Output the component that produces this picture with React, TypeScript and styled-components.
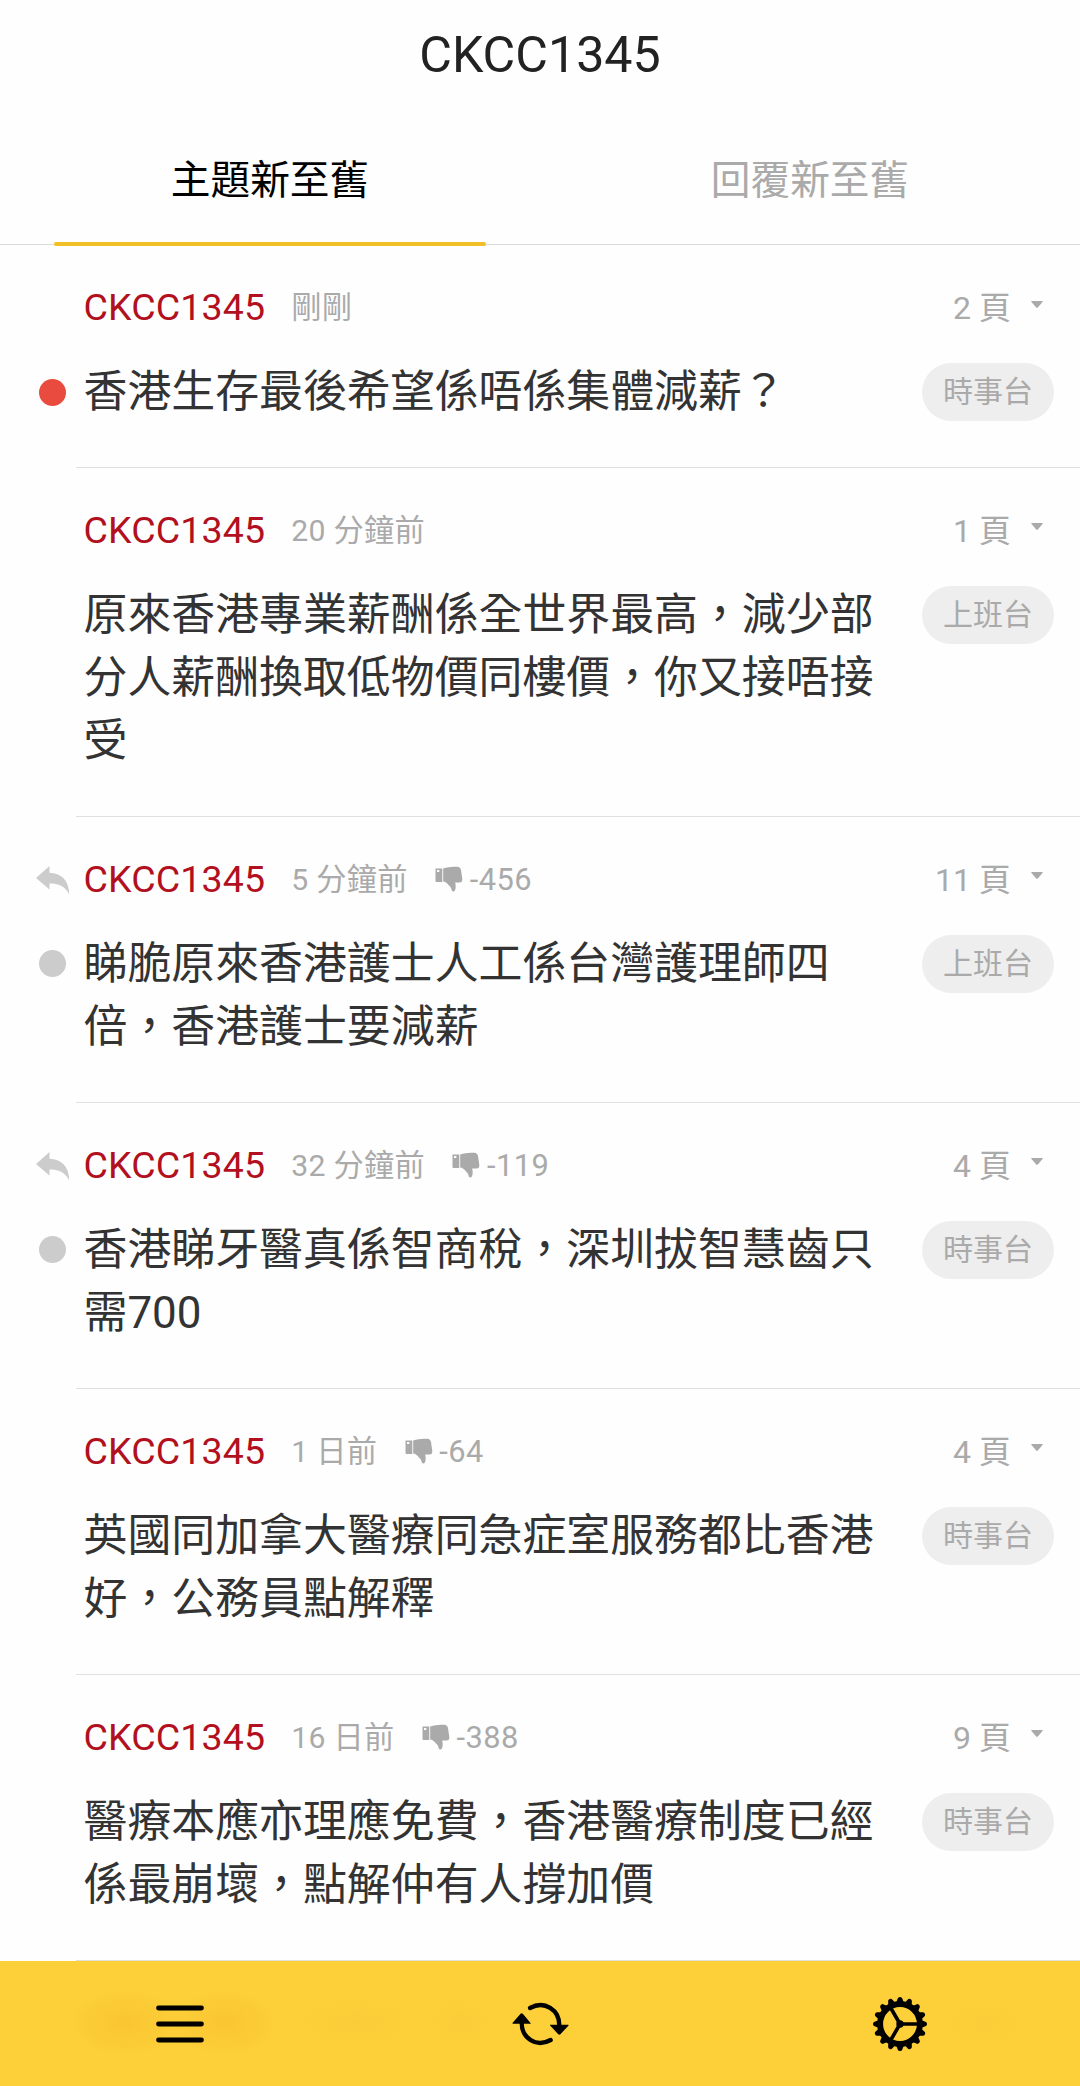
import React from 'react';
import styled, { createGlobalStyle } from 'styled-components';

const GlobalStyle = createGlobalStyle`
  *, *::before, *::after { box-sizing: border-box; }
  body {
    margin: 0;
    background: #fefefe;
    font-family: Roboto, "Noto Sans CJK TC", sans-serif;
  }
`;

const Screen = styled.div`
  width: 1080px;
  height: 2086px;
  overflow: hidden;
  display: flex;
  flex-direction: column;
  background: #fefefe;
`;

const Header = styled.header`
  flex: none;
  height: 116px;
  padding-top: 25px;
  text-align: center;
  font-size: 50.2px;
  line-height: 60px;
  color: #222;
`;

const Tabs = styled.nav`
  flex: none;
  display: flex;
  height: 129px;
  border-bottom: 1px solid #dadada;
`;

const Tab = styled.div<{ $active?: boolean }>`
  position: relative;
  flex: 1;
  padding-top: 35px;
  text-align: center;
  font-size: 39.7px;
  line-height: 60px;
  color: ${(p) => (p.$active ? '#000' : '#aaa')};

  &::after {
    content: '';
    display: ${(p) => (p.$active ? 'block' : 'none')};
    position: absolute;
    left: 54px;
    right: 54px;
    bottom: -2px;
    height: 4px;
    border-radius: 2px;
    background: #f1bf26;
  }
`;

const List = styled.main`
  flex: 1;
  min-height: 0;
  overflow: hidden;
`;

const Row = styled.article`
  display: grid;
  grid-template-columns: 76px 1fr;
`;

const Gutter = styled.div`
  display: flex;
  flex-direction: column;
  align-items: center;
  padding: 40px 0 0 29px;
`;

const ReplySlot = styled.div`
  height: 44px;
  padding-top: 9px;
  svg { display: block; }
`;

const Dot = styled.span<{ $color: string }>`
  width: 27px;
  height: 27px;
  margin-top: 49.5px;
  border-radius: 50%;
  background: ${(p) => p.$color};
`;

const Body = styled.div`
  padding: 40px 26px 42.8px 7.5px;
  border-bottom: 1px solid #e0e0e0;
`;

const Meta = styled.div`
  display: flex;
  align-items: center;
  height: 44px;
  color: #aaa;
  font-size: 30.2px;
  line-height: 44px;
`;

const Author = styled.span`
  font-size: 37.5px;
  letter-spacing: 0.15px;
  color: #b2101f;
`;

const Time = styled.span`
  margin-left: 26px;
  padding-top: 2px;
  letter-spacing: 0.3px;
`;

const Votes = styled.span`
  display: flex;
  align-items: center;
  margin-left: 27.5px;
  padding-top: 2px;
  gap: 6.5px;
  font-size: 30.8px;
  letter-spacing: 0.5px;
`;

const Pages = styled.span`
  display: flex;
  align-items: center;
  margin-left: auto;
  margin-right: 11px;
  padding-top: 2px;
  gap: 20px;
  font-size: 32px;
  svg { margin-top: -8px; }
`;

const Content = styled.div`
  display: flex;
  justify-content: space-between;
  align-items: flex-start;
  margin-top: 32px;
`;

const Title = styled.h2`
  margin: 0;
  width: 800px;
  font-size: 43.9px;
  font-weight: 400;
  line-height: 63.1px;
  color: #333;
`;

const Badge = styled.span`
  flex: none;
  width: 132px;
  height: 58px;
  margin-top: 2px;
  border-radius: 29px;
  background: #eee;
  text-align: center;
  font-size: 30px;
  line-height: 57px;
  color: #aaa;
`;

const BottomBar = styled.footer`
  flex: none;
  display: grid;
  grid-template-columns: repeat(3, 1fr);
  place-items: center;
  height: 125px;
  background:
    radial-gradient(ellipse 60px 36px at 125px 62px, rgba(240, 170, 30, 0.26), rgba(240, 170, 30, 0.13) 60%, transparent),
    radial-gradient(ellipse 56px 36px at 225px 62px, rgba(240, 170, 30, 0.26), rgba(240, 170, 30, 0.13) 60%, transparent),
    radial-gradient(ellipse 70px 28px at 355px 62px, rgba(235, 175, 40, 0.12), transparent),
    radial-gradient(ellipse 35px 28px at 460px 62px, rgba(235, 175, 40, 0.12), transparent),
    radial-gradient(ellipse 50px 28px at 985px 62px, rgba(235, 175, 40, 0.1), transparent),
    #fdd039;
`;

const ReplyIcon = () => (
  <svg width="34" height="29" viewBox="0 0 34 29" fill="#ccc">
    <path d="M0 12 L13.5 0 V6.7 C25 7 33 14 33.3 28.5 C29 20 22.5 17.5 13.5 17.5 V23.5 Z" />
  </svg>
);

const ThumbDown = () => (
  <svg width="28" height="27" viewBox="0 0 28 27" fill="#aaa">
    <path fillRule="evenodd" d="M0.5 2.5 H7.3 V16 H1.5 Q0.5 16 0.5 15 Z M2 4 V6 H4.3 V4 Z" />
    <path d="M8.2 2.5 C12 1.5 15 0.7 19 0.7 H22.5 Q25.3 1 26 4 L27.3 13 Q27.5 16.5 24.5 16.5 H20.2 C21 20 21 25.5 18.3 25.5 C16 25.5 17.2 22.5 15 20.5 C13 18.3 12 16.2 8.2 15.4 Z" />
  </svg>
);

const Caret = () => (
  <svg width="12" height="7" viewBox="0 0 12 7" fill="#aaa">
    <path d="M0.8 0 H11.2 Q12.3 0 11.5 1 L6.8 6.4 Q6 7 5.2 6.4 L0.5 1 Q-0.3 0 0.8 0 Z" />
  </svg>
);

const MenuIcon = () => (
  <svg width="48" height="38" viewBox="0 0 48 38" stroke="#000" strokeWidth="4.8" strokeLinecap="round">
    <path d="M2.5 3 H45.5 M2.5 19 H45.5 M2.5 35 H45.5" />
  </svg>
);

const RefreshIcon = () => (
  <svg width="60" height="60" viewBox="61 70 180 180">
    <g fill="none" stroke="#000" strokeWidth="13" strokeLinecap="round">
      <path d="M121 112 C165 88 209 118 209 164" />
      <path d="M183 208 C139 232 96 202 96 156" />
    </g>
    <path d="M182 162 H235 Q238 162 236 165 L213 190 Q209 194 205 190 L182 165 Q180 162 182 162 Z" />
    <path d="M70 159 H122 Q125 159 122 156 L100 130 Q96 126 92 130 L69 156 Q67 159 70 159 Z" />
  </svg>
);

const teeth = Array.from({ length: 16 }, (_, i) => i * 22.5);

const GearIcon = () => (
  <svg width="56" height="56" viewBox="-28 -28 56 56">
    <circle r="19.9" fill="none" stroke="#000" strokeWidth="6" />
    {teeth.map((angle) => (
      <path key={angle} transform={`rotate(${angle})`} d="M-3.8 -21.5 L-2.3 -25.4 Q-1.9 -27 0 -27 Q1.9 -27 2.3 -25.4 L3.8 -21.5 Z" />
    ))}
    <path d="M0 0 H19 M0 0 L-9.5 -16.5 M0 0 L-9.5 16.5" stroke="#000" strokeWidth="3.6" />
    <circle r="3.7" />
  </svg>
);

type Thread = {
  time: string;
  votes?: number;
  pages: number;
  title: string;
  board: string;
  replied?: boolean;
  dot?: string;
};

const threads: Thread[] = [
  { time: '剛剛', pages: 2, title: '香港生存最後希望係唔係集體減薪？', board: '時事台', dot: '#ea4b3f' },
  { time: '20 分鐘前', pages: 1, title: '原來香港專業薪酬係全世界最高，減少部分人薪酬換取低物價同樓價，你又接唔接受', board: '上班台' },
  { time: '5 分鐘前', votes: -456, pages: 11, title: '睇脆原來香港護士人工係台灣護理師四倍，香港護士要減薪', board: '上班台', replied: true, dot: '#ccc' },
  { time: '32 分鐘前', votes: -119, pages: 4, title: '香港睇牙醫真係智商稅，深圳拔智慧齒只需700', board: '時事台', replied: true, dot: '#ccc' },
  { time: '1 日前', votes: -64, pages: 4, title: '英國同加拿大醫療同急症室服務都比香港好，公務員點解釋', board: '時事台' },
  { time: '16 日前', votes: -388, pages: 9, title: '醫療本應亦理應免費，香港醫療制度已經係最崩壞，點解仲有人撐加價', board: '時事台' },
];

const ThreadRow = ({ thread }: { thread: Thread }) => (
  <Row>
    <Gutter>
      <ReplySlot>{thread.replied && <ReplyIcon />}</ReplySlot>
      {thread.dot && <Dot $color={thread.dot} />}
    </Gutter>
    <Body>
      <Meta>
        <Author>CKCC1345</Author>
        <Time>{thread.time}</Time>
        {thread.votes !== undefined && (
          <Votes>
            <ThumbDown />
            {thread.votes}
          </Votes>
        )}
        <Pages>
          {thread.pages} 頁
          <Caret />
        </Pages>
      </Meta>
      <Content>
        <Title>{thread.title}</Title>
        <Badge>{thread.board}</Badge>
      </Content>
    </Body>
  </Row>
);

export default function App() {
  return (
    <Screen lang="zh-Hant-HK">
      <GlobalStyle />
      <Header>CKCC1345</Header>
      <Tabs>
        <Tab $active>主題新至舊</Tab>
        <Tab>回覆新至舊</Tab>
      </Tabs>
      <List>
        {threads.map((thread) => (
          <ThreadRow key={thread.title} thread={thread} />
        ))}
      </List>
      <BottomBar>
        <MenuIcon />
        <RefreshIcon />
        <GearIcon />
      </BottomBar>
    </Screen>
  );
}
